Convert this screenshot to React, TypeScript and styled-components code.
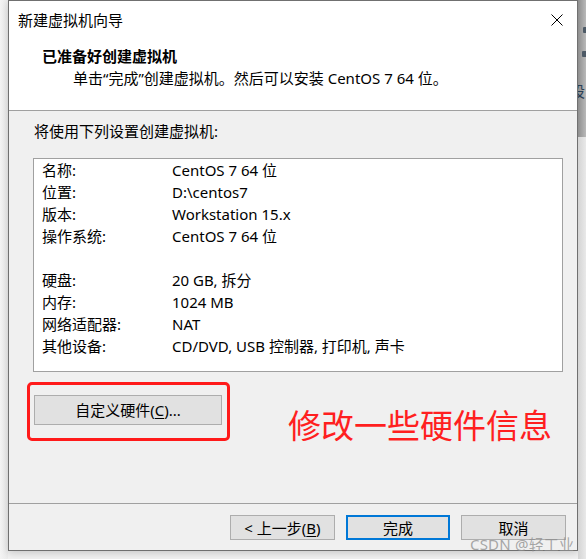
import React from "react";
import styled, { createGlobalStyle } from "styled-components";

const GlobalStyle = createGlobalStyle`
  html, body { margin: 0; padding: 0; background: #f3f3f3; }
  body { font-family: "Noto Sans", "Noto Sans CJK SC", sans-serif; }
`;

const Page = styled.div`
  position: relative;
  width: 586px;
  height: 559px;
  overflow: hidden;
  display: flex;
  align-items: flex-start;
  background: #f2f2f2;
`;

const LeftGutter = styled.div`
  width: 8px;
  height: 559px;
  flex: none;
  background: linear-gradient(to right, #f4f4f4, #ececec);
`;

const RightGutter = styled.div`
  width: 8px;
  height: 559px;
  flex: none;
  display: flex;
  flex-direction: column;
  overflow: hidden;
`;

const GutterTop = styled.div`
  height: 137px;
  background: linear-gradient(to right, #8e8e8e, #b9b9b9);
  display: flex;
  flex-direction: column;
  gap: 18px;
  padding-top: 27px;
  box-sizing: border-box;
`;

const GutterBottom = styled.div`
  flex: 1;
  background: linear-gradient(to right, #d4d4d4, #e9e9e9);
`;

const GutterMark = styled.div<{ $w: number }>`
  margin-left: ${(p) => 8 - p.$w}px;
  width: 10px;
  height: 6px;
  background: #4d5a66;
  border-radius: 1px;
`;

const GutterChar = styled.div`
  margin-left: -8px;
  margin-top: 6px;
  font-family: "Noto Sans CJK SC", sans-serif;
  font-size: 15px;
  line-height: 20px;
  color: #2a3f55;
`;

const Dialog = styled.div`
  width: 570px;
  height: 551px;
  flex: none;
  box-sizing: border-box;
  border: 1px solid #707070;
  display: flex;
  flex-direction: column;
  background: #f0f0f0;
  box-shadow: 0 2px 8px rgba(0, 0, 0, 0.18);
  font-size: 15px;
  color: #000;
`;

const Header = styled.div`
  background: #ffffff;
  height: 109px;
  border-bottom: 1px solid #a0a0a0;
  display: flex;
  flex-direction: column;
`;

const TitleBar = styled.div`
  height: 38px;
  display: flex;
  align-items: center;
  justify-content: space-between;
  padding: 0 14px 0 9px;
  box-sizing: border-box;
`;

const TitleText = styled.span`
  font-size: 15px;
  line-height: 20px;
`;

const CloseIcon = styled.svg`
  width: 12px;
  height: 12px;
  display: block;
`;

const HeaderTitle = styled.div`
  padding-left: 33px;
  margin-top: 6px;
  font-weight: bold;
  font-size: 15px;
  line-height: 22px;
`;

const HeaderSub = styled.div`
  padding-left: 64px;
  font-size: 15px;
  line-height: 22px;
`;

const Body = styled.div`
  flex: 1;
  display: flex;
  flex-direction: column;
  padding: 9px 14px 0 24px;
  box-sizing: border-box;
`;

const Intro = styled.div`
  line-height: 22px;
  padding-left: 1px;
`;

const SettingsBox = styled.div`
  margin-top: 16px;
  width: 530px;
  box-sizing: border-box;
  border: 1px solid #a0a0a0;
  background: #ffffff;
  padding: 0 0 14px 8px;
  display: grid;
  grid-template-columns: 130px 1fr;
  grid-auto-rows: 22px;
  line-height: 22px;
`;

const Spacer = styled.div`
  grid-column: 1 / span 2;
`;

const ActionRow = styled.div`
  margin-top: 6px;
  display: flex;
  align-items: center;
  margin-left: -6px;
`;

const Highlight = styled.div`
  border: 3px solid #ff1a1a;
  border-radius: 5px;
  width: 203px;
  height: 59px;
  box-sizing: border-box;
  padding: 10px 0 0 4px;
`;

const PushButton = styled.button<{ $primary?: boolean; $w: number; $h: number }>`
  width: ${(p) => p.$w}px;
  height: ${(p) => p.$h}px;
  box-sizing: border-box;
  border: ${(p) => (p.$primary ? "2px solid #0078d7" : "1px solid #adadad")};
  background: #e1e1e1;
  font-family: "Noto Sans", "Noto Sans CJK SC", sans-serif;
  font-size: 15px;
  color: #000;
  padding: 0;
  display: flex;
  align-items: center;
  justify-content: center;
  line-height: 20px;
`;

const Key = styled.span`
  text-decoration: underline;
  text-underline-offset: 2px;
`;

const Note = styled.div`
  margin-left: 58px;
  margin-top: 26px;
  color: #ff1f1f;
  font-family: "Noto Sans CJK SC", sans-serif;
  font-size: 33px;
  line-height: 40px;
`;

const Footer = styled.div`
  height: 47px;
  border-top: 1px solid #a0a0a0;
  display: flex;
  justify-content: flex-end;
  align-items: flex-start;
  gap: 11px;
  padding: 11px 11px 0 0;
  box-sizing: border-box;
`;

const Watermark = styled.div`
  position: absolute;
  left: 470px;
  top: 534px;
  font-family: "Noto Sans", "Noto Sans CJK SC", sans-serif;
  font-size: 15px;
  line-height: 20px;
  color: rgba(140, 140, 140, 0.75);
  letter-spacing: 0.2px;
`;

const rows1: [string, string][] = [
  ["名称:", "CentOS 7 64 位"],
  ["位置:", "D:\\centos7"],
  ["版本:", "Workstation 15.x"],
  ["操作系统:", "CentOS 7 64 位"],
];

const rows2: [string, string][] = [
  ["硬盘:", "20 GB, 拆分"],
  ["内存:", "1024 MB"],
  ["网络适配器:", "NAT"],
  ["其他设备:", "CD/DVD, USB 控制器, 打印机, 声卡"],
];

export default function App() {
  return (
    <>
      <GlobalStyle />
      <Page>
        <LeftGutter />
        <Dialog>
          <Header>
            <TitleBar>
              <TitleText>新建虚拟机向导</TitleText>
              <CloseIcon viewBox="0 0 12 12">
                <path d="M0.5 0.5 L11.5 11.5 M11.5 0.5 L0.5 11.5" stroke="#000" strokeWidth="1" fill="none" />
              </CloseIcon>
            </TitleBar>
            <HeaderTitle>已准备好创建虚拟机</HeaderTitle>
            <HeaderSub>单击“完成”创建虚拟机。然后可以安装 CentOS 7 64 位。</HeaderSub>
          </Header>
          <Body>
            <Intro>将使用下列设置创建虚拟机:</Intro>
            <SettingsBox>
              {rows1.map(([k, v]) => (
                <React.Fragment key={k}>
                  <span>{k}</span>
                  <span>{v}</span>
                </React.Fragment>
              ))}
              <Spacer />
              {rows2.map(([k, v]) => (
                <React.Fragment key={k}>
                  <span>{k}</span>
                  <span>{v}</span>
                </React.Fragment>
              ))}
            </SettingsBox>
            <ActionRow>
              <Highlight>
                <PushButton $w={188} $h={30}>
                  自定义硬件(<Key>C</Key>)...
                </PushButton>
              </Highlight>
              <Note>修改一些硬件信息</Note>
            </ActionRow>
          </Body>
          <Footer>
            <PushButton $w={105} $h={25}>
              &lt; 上一步(<Key>B</Key>)
            </PushButton>
            <PushButton $w={104} $h={25} $primary>
              完成
            </PushButton>
            <PushButton $w={105} $h={25}>
              取消
            </PushButton>
          </Footer>
        </Dialog>
        <RightGutter>
          <GutterTop>
            <GutterMark $w={3} />
            <GutterMark $w={4} />
            <GutterChar>设</GutterChar>
          </GutterTop>
          <GutterBottom />
        </RightGutter>
        <Watermark>CSDN @轻工业</Watermark>
      </Page>
    </>
  );
}
